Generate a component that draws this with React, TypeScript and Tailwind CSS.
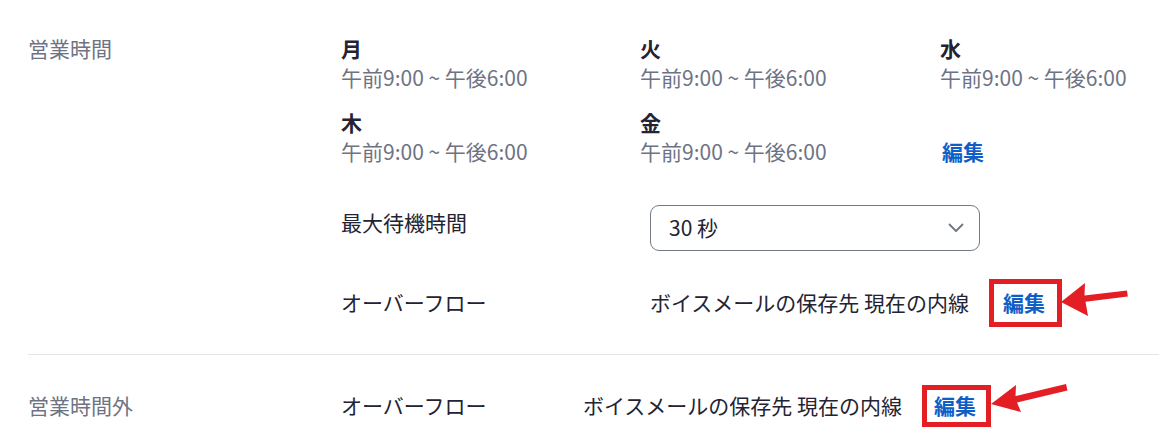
import React from "react";

const FONT = { fontFamily: '"Noto Sans CJK JP", "Noto Sans", sans-serif' };

function Day({ name }: { name: string }) {
  return (
    <div className="flex flex-col">
      <span className="font-bold text-[#232333] leading-[29px]">{name}</span>
      <span className="text-[#6e7384] leading-[29px]">午前9:00 ~ 午後6:00</span>
    </div>
  );
}

function Chevron() {
  return (
    <svg width="16" height="10" viewBox="0 0 16 10" fill="none">
      <path d="M1.5 1.5 L8 8 L14.5 1.5" stroke="#6e7680" strokeWidth="1.8" strokeLinecap="round" strokeLinejoin="round" />
    </svg>
  );
}

function Arrow({ className, d }: { className: string; d: string }) {
  return (
    <svg className={className} width="80" height="40" viewBox="0 0 80 40" fill="#e31e24">
      <path d={d} />
    </svg>
  );
}

export default function App() {
  return (
    <div className="relative w-[1159px] h-[441px] bg-white pl-[28px] text-[21px] overflow-hidden" style={FONT}>
      {/* section 1 */}
      <div className="flex pt-[34px] pb-[27px]">
        <div className="w-[313px] text-[#6e7384] leading-[29px]">営業時間</div>
        <div className="flex flex-col">
          <div className="grid grid-cols-[299px_300px_auto] gap-y-[16px]">
            <Day name="月" />
            <Day name="火" />
            <Day name="水" />
            <Day name="木" />
            <Day name="金" />
            <div className="flex flex-col justify-end">
              <a className="pl-[2px] font-bold text-[#0f5ec7] leading-[29px]">編集</a>
            </div>
          </div>
          <div className="flex items-start mt-[39px]">
            <div className="w-[309px] pt-[3px] leading-[29px] text-[#232333]">最大待機時間</div>
            <div className="w-[330px] h-[46px] rounded-[9px] border border-[#747b86] flex items-center justify-between pl-[18px] pr-[15px] text-[#232333]">
              <span>30 秒</span>
              <Chevron />
            </div>
          </div>
          <div className="flex items-center mt-[28px] h-[48px]">
            <div className="w-[309px] text-[#232333]">オーバーフロー</div>
            <div className="text-[#232333]">ボイスメールの保存先 現在の内線</div>
            <div className="ml-[20px] w-[73px] h-[48px] border-[5px] border-[#e31e24] flex items-center pl-[9px]">
              <a className="font-bold text-[#0f5ec7]">編集</a>
            </div>
          </div>
        </div>
      </div>
      <div className="border-t border-[#e3e4ea]" />
      {/* section 2 */}
      <div className="flex items-center pt-[30px]">
        <div className="w-[313px] text-[#6e7384]">営業時間外</div>
        <div className="w-[242px] text-[#232333]">オーバーフロー</div>
        <div className="text-[#232333]">ボイスメールの保存先 現在の内線</div>
        <div className="ml-[20px] w-[69px] h-[42px] border-[5px] border-[#e31e24] flex items-center pl-[7px]">
          <a className="font-bold text-[#0f5ec7]">編集</a>
        </div>
      </div>

      {/* annotation arrows */}
      <Arrow
        className="absolute left-[1058px] top-[280px]"
        d="M3 22 L27 3 L26.5 15.5 L69 10.5 L69.8 16.5 L27.5 21.8 L30 36 Z"
      />
      <Arrow
        className="absolute left-[988px] top-[381px]"
        d="M3 23 L28 4 L27.5 15 L78 3 L79.5 9.5 L29 21.5 L33 31 Z"
      />
    </div>
  );
}
